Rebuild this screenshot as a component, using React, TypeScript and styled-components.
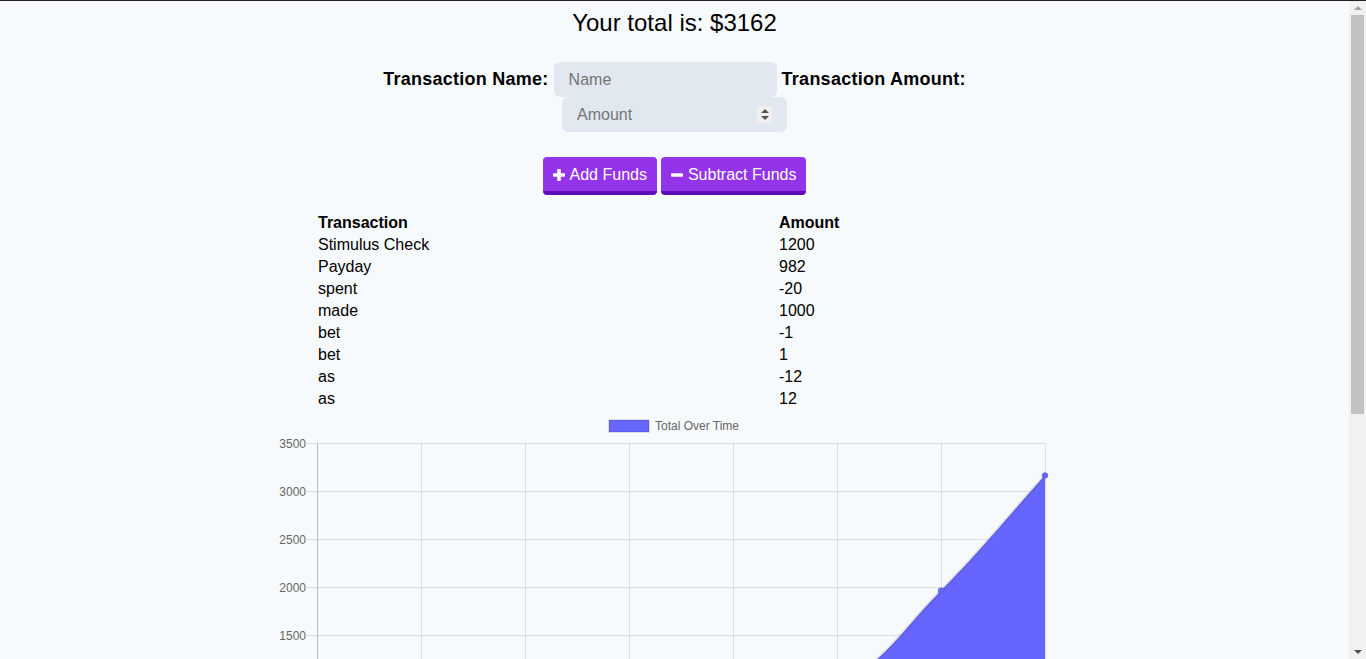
import React from "react";
import styled, { createGlobalStyle } from "styled-components";

const GlobalStyle = createGlobalStyle`
  html, body { margin: 0; padding: 0; }
  body {
    background: #f7fafc;
    font-family: "Liberation Sans", Arial, sans-serif;
    color: #000;
    border-top: 1px solid #222;
  }
`;

const Shell = styled.div`
  display: flex;
  height: calc(100vh - 1px);
  overflow: hidden;
`;

const Viewport = styled.div`
  flex: 1;
  min-width: 0;
  overflow: hidden;
`;

const Rail = styled.aside`
  width: 17px;
  flex: none;
  display: flex;
  flex-direction: column;
  background: #f1f1f1;
`;

const RailButton = styled.div<{ $down?: boolean }>`
  height: 14px;
  flex: none;
  display: flex;
  align-items: center;
  justify-content: center;
  &::before {
    content: "";
    width: 0;
    height: 0;
    border-left: 4px solid transparent;
    border-right: 4px solid transparent;
    ${(p) => (p.$down ? "border-top: 4px solid #505050;" : "border-bottom: 4px solid #a3a3a3;")}
  }
`;

const Track = styled.div`
  flex: 1;
  padding: 0 2px;
`;

const Thumb = styled.div`
  height: 399px;
  background: #c1c1c1;
`;

const Page = styled.main`
  display: flex;
  flex-direction: column;
  align-items: center;
  padding: 8px 0 0;
`;

const Total = styled.h1`
  margin: 0;
  font-size: 24px;
  font-weight: normal;
  line-height: 28px;
`;

const Form = styled.form`
  margin-top: 25px;
  width: 700px;
  display: flex;
  flex-wrap: wrap;
  justify-content: center;
  align-items: center;
  column-gap: 5px;
`;

const Label = styled.label`
  font-size: 18px;
  font-weight: bold;
  letter-spacing: 0.25px;
  line-height: 35px;
`;

const Field = styled.div<{ $w: number }>`
  display: flex;
  align-items: center;
  box-sizing: border-box;
  width: ${(p) => p.$w}px;
  height: 35px;
  padding: 0 15px;
  background: #e2e8f0;
  border-radius: 6px;
`;

const Input = styled.input`
  flex: 1;
  min-width: 0;
  border: 0;
  outline: 0;
  padding: 0;
  background: transparent;
  font: 16px "Liberation Sans", Arial, sans-serif;
  color: #000;
  &::placeholder { color: #757575; }
  &::-webkit-inner-spin-button,
  &::-webkit-outer-spin-button { -webkit-appearance: none; margin: 0; }
`;

const Spinner = styled.span`
  display: flex;
  flex-direction: column;
  align-items: center;
  justify-content: center;
  gap: 3px;
  width: 15px;
  height: 17px;
  background: #f0f0f0;
`;

const Arrow = styled.span<{ $down?: boolean }>`
  width: 0;
  height: 0;
  border-left: 4px solid transparent;
  border-right: 4px solid transparent;
  ${(p) => (p.$down ? "border-top: 4px solid #555;" : "border-bottom: 4px solid #555;")}
`;

const Actions = styled.div`
  margin-top: 25px;
  display: flex;
  gap: 4px;
`;

const Button = styled.button`
  display: flex;
  align-items: center;
  gap: 5px;
  padding: 9px 10px 7px;
  border: 0;
  border-bottom: 4px solid #5c0db5;
  border-radius: 4px;
  background: #9333ea;
  color: #fff;
  font: 16px/18px "Liberation Sans", Arial, sans-serif;
  cursor: pointer;
`;

const Table = styled.table`
  margin-top: 16px;
  width: 719px;
  table-layout: fixed;
  border-spacing: 2px;
  font-size: 16px;
  line-height: 18px;
`;

const Cell = styled.td`
  padding: 1px;
  text-align: left;
`;

const Head = styled.th<{ $w?: number }>`
  padding: 1px;
  text-align: left;
  font-weight: bold;
  ${(p) => (p.$w ? `width: ${p.$w}px;` : "")}
`;

const ChartSvg = styled.svg`
  display: block;
  flex: none;
  font-family: "Liberation Sans", Arial, sans-serif;
`;

const PlusIcon = () => (
  <svg width="12" height="12" viewBox="0 0 12 12" aria-hidden>
    <rect x="4.2" y="0" width="3.6" height="12" rx="0.8" fill="#fff" />
    <rect x="0" y="4.2" width="12" height="3.6" rx="0.8" fill="#fff" />
  </svg>
);

const MinusIcon = () => (
  <svg width="12" height="12" viewBox="0 0 12 12" aria-hidden>
    <rect x="0" y="4.2" width="12" height="3.6" rx="0.8" fill="#fff" />
  </svg>
);

const transactions = [
  ["Stimulus Check", "1200"],
  ["Payday", "982"],
  ["spent", "-20"],
  ["made", "1000"],
  ["bet", "-1"],
  ["bet", "1"],
  ["as", "-12"],
  ["as", "12"],
];

const series = [12, 0, 1, 0, 1000, 980, 1962, 3162];

const W = 801;
const H = 400;
const L = 43;
const R = 771;
const T = 32;
const B = 368;
const MAX = 3500;

type P = { x: number; y: number };

function buildPath(pts: P[]) {
  const t = 0.4;
  const clampX = (v: number) => Math.max(L, Math.min(R, v));
  const clampY = (v: number) => Math.max(T, Math.min(B, v));
  const cps = pts.map((cur, i) => {
    const prev = pts[i - 1] || cur;
    const next = pts[i + 1] || cur;
    const d01 = Math.hypot(cur.x - prev.x, cur.y - prev.y);
    const d12 = Math.hypot(next.x - cur.x, next.y - cur.y);
    let s01 = d01 / (d01 + d12);
    let s12 = d12 / (d01 + d12);
    if (isNaN(s01)) s01 = 0;
    if (isNaN(s12)) s12 = 0;
    const fa = t * s01;
    const fb = t * s12;
    return {
      p: { x: clampX(cur.x - fa * (next.x - prev.x)), y: clampY(cur.y - fa * (next.y - prev.y)) },
      n: { x: clampX(cur.x + fb * (next.x - prev.x)), y: clampY(cur.y + fb * (next.y - prev.y)) },
    };
  });
  let d = `M${pts[0].x},${pts[0].y}`;
  for (let i = 1; i < pts.length; i++) {
    const a = cps[i - 1].n;
    const b = cps[i].p;
    d += ` C${a.x},${a.y} ${b.x},${b.y} ${pts[i].x},${pts[i].y}`;
  }
  return d;
}

const Chart = () => {
  const step = (R - L) / (series.length - 1);
  const pts = series.map((v, i) => ({ x: L + i * step, y: T + ((MAX - v) / MAX) * (B - T) }));
  const line = buildPath(pts);
  const area = `${line} L${R},${B} L${L},${B} Z`;
  const yTicks = [3500, 3000, 2500, 2000, 1500, 1000, 500, 0];
  return (
    <ChartSvg width={W} height={H} viewBox={`0 0 ${W} ${H}`}>
      <rect x="335" y="9" width="40" height="12" fill="#6666ff" stroke="rgba(0,0,0,0.1)" strokeWidth="2" />
      <text x="381" y="19" fontSize="12" fill="#666">Total Over Time</text>
      {yTicks.map((v, k) => {
        const y = T + k * 48 + 0.5;
        return (
          <g key={v}>
            <line x1={L - 10} x2={R} y1={y} y2={y} stroke={v === 0 ? "rgba(0,0,0,0.25)" : "rgba(0,0,0,0.1)"} />
            <text x={L - 11} y={y + 4} fontSize="12" fill="#666" textAnchor="end">{v}</text>
          </g>
        );
      })}
      {series.map((_, i) => {
        const x = L + i * step + 0.5;
        return (
          <line key={i} x1={x} x2={x} y1={T} y2={B + 10} stroke={i === 0 ? "rgba(0,0,0,0.25)" : "rgba(0,0,0,0.1)"} />
        );
      })}
      <path d={area} fill="#6666ff" />
      <path d={line} fill="none" stroke="rgba(0,0,0,0.1)" strokeWidth="3" />
      {pts.map((p, i) => (
        <circle key={i} cx={p.x} cy={p.y} r="3" fill="#6666ff" stroke="rgba(0,0,0,0.1)" strokeWidth="1" />
      ))}
    </ChartSvg>
  );
};

export default function App() {
  return (
    <>
      <GlobalStyle />
      <Shell>
        <Viewport>
          <Page>
            <Total>Your total is: $3162</Total>
            <Form onSubmit={(e) => e.preventDefault()}>
              <Label htmlFor="t-name">Transaction Name:</Label>
              <Field $w={223}>
                <Input id="t-name" type="text" placeholder="Name" />
              </Field>
              <Label htmlFor="t-amount">Transaction Amount:</Label>
              <Field $w={225}>
                <Input id="t-amount" type="number" placeholder="Amount" />
                <Spinner>
                  <Arrow />
                  <Arrow $down />
                </Spinner>
              </Field>
            </Form>
            <Actions>
              <Button type="button">
                <PlusIcon />
                Add Funds
              </Button>
              <Button type="button">
                <MinusIcon />
                Subtract Funds
              </Button>
            </Actions>
            <Table>
              <thead>
                <tr>
                  <Head $w={457}>Transaction</Head>
                  <Head>Amount</Head>
                </tr>
              </thead>
              <tbody>
                {transactions.map(([name, amt], i) => (
                  <tr key={i}>
                    <Cell>{name}</Cell>
                    <Cell>{amt}</Cell>
                  </tr>
                ))}
              </tbody>
            </Table>
            <Chart />
          </Page>
        </Viewport>
        <Rail aria-hidden>
          <RailButton />
          <Track>
            <Thumb />
          </Track>
          <RailButton $down />
        </Rail>
      </Shell>
    </>
  );
}
